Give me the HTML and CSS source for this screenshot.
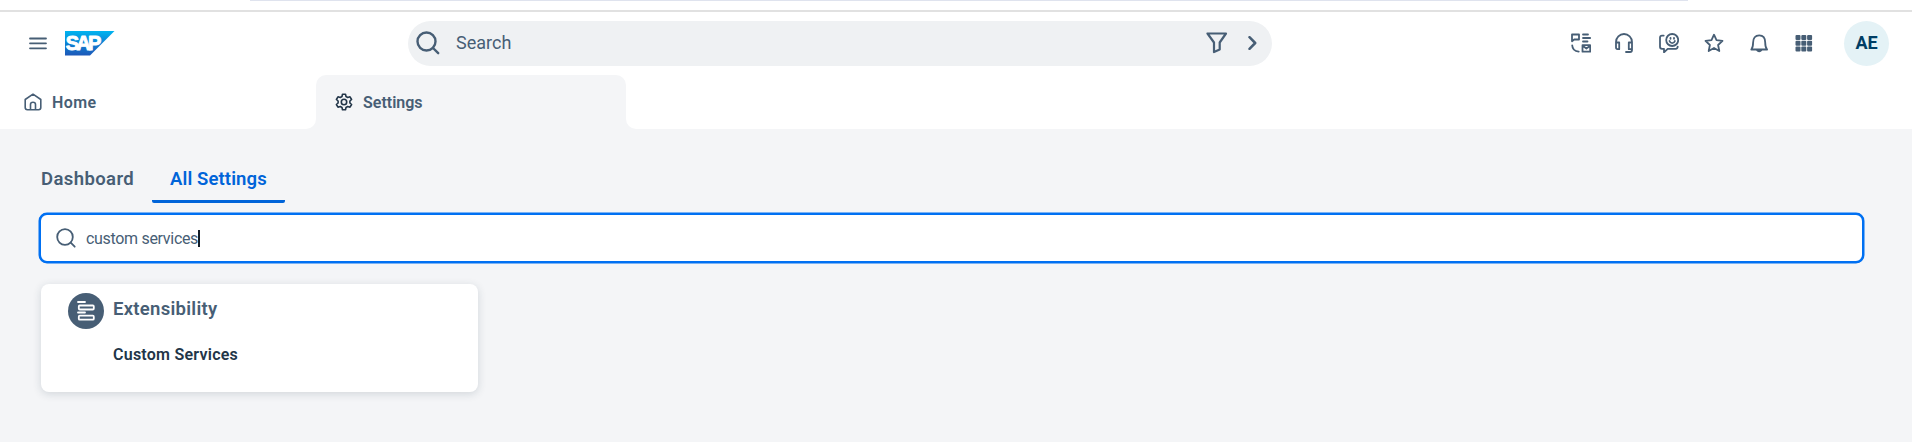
FILE: index.html
```
<!DOCTYPE html>
<html lang="en">
<head>
<meta charset="utf-8">
<title>Settings</title>
<link rel="stylesheet" href="styles.css">
</head>
<body>
<div class="browser-edge"><div class="address-edge"></div></div>
<header class="shell">
  <svg class="menu" viewBox="0 0 18 13"><path d="M1 1.500h16M1 6.300h16M1 11.300h16"/></svg>
  <svg class="logo" viewBox="0 0 50 25" role="img" aria-label="SAP">
    <defs><linearGradient id="sap" x1="0" y1="0" x2="0" y2="1"><stop offset="0" stop-color="#00b4f0"/><stop offset=".5" stop-color="#0d82d4"/><stop offset="1" stop-color="#1d58b8"/></linearGradient></defs>
    <path d="M0 0h49.500L25 24.500H0z" fill="url(#sap)"/>
    <text class="logo-text" x="0.800" y="19.300" textLength="35.500">SAP</text>
  </svg>
  <div class="search">
    <svg class="search-icon" viewBox="0 0 24 24"><circle cx="10.500" cy="10.500" r="9"/><path d="M17 17l5.200 5.200"/></svg>
    <span class="search-label">Search</span>
    <svg class="filter" viewBox="0 0 22 22"><path d="M1.500 1.500h18.500L13.700 10.500v7L8 20v-9.500z"/></svg>
    <svg class="chevron" viewBox="0 0 9 14"><path d="M1.500 1.200L7.200 7l-5.700 5.800"/></svg>
  </div>
  <nav class="actions">
    <svg viewBox="0 0 20 20"><path d="M1 8.200V1.500h7v5H3.200zM12 1.500h5M12 5h7.200M12 8.500h4.500M1.200 12.300c.2 3.700 2.600 6 6.500 6.300M11.500 12.200h7.700v6.500h-7.700zM12 13l3.400 2.500 3.400-2.500"/></svg>
    <svg viewBox="0 0 20 20"><path d="M2 10V9a8 8 0 0 1 16 0v8c0 1.300-.8 2-2 2h-4M2 9.500h3.200v6.700H3.500C2.500 16.200 2 15.500 2 14.500zM18 9.500h-3.200v6.700H18"/></svg>
    <svg viewBox="0 0 20 20"><circle cx="13.200" cy="7" r="6"/><path d="M4.700 2.600H3c-1.300 0-2 .8-2 2v9.200c0 1.300.7 2 2 2h2v3.500l3.700-3.500h8c1.400 0 2-.8 2-2.200M10.500 8c1 2.800 4.400 2.800 5.400 0M11.500 4.800v1M15 4.800v1"/></svg>
    <svg viewBox="0 0 20 20"><path d="M10 1.700l2.500 5.500 6 .7-4.400 4.100 1.200 6-5.300-3-5.300 3 1.200-6L1.500 7.900l6-.7z"/></svg>
    <svg viewBox="0 0 20 20"><path d="M2.300 16.500c1.700-2 1.800-3.700 1.800-7C4.100 5 6.300 2.300 10.200 2.300s6 2.700 6 7.200c0 3.300.1 5 1.900 7z"/><path class="solid" d="M7 16.500h6.400c-.7 3.600-5.700 3.600-6.400 0z"/></svg>
    <svg viewBox="0 0 20 20"><g class="solid"><rect x="1.500" y="2" width="5" height="5" rx="1"/><rect x="7.300" y="2" width="5" height="5" rx="1"/><rect x="13.100" y="2" width="5" height="5" rx="1"/><rect x="1.500" y="7.800" width="5" height="5" rx="1"/><rect x="7.300" y="7.800" width="5" height="5" rx="1"/><rect x="13.100" y="7.800" width="5" height="5" rx="1"/><rect x="1.500" y="13.600" width="5" height="5" rx="1"/><rect x="7.300" y="13.600" width="5" height="5" rx="1"/><rect x="13.100" y="13.600" width="5" height="5" rx="1"/></g></svg>
  </nav>
  <div class="avatar">AE</div>
</header>
<nav class="tabs">
  <div class="tab tab-home">
    <svg viewBox="0 0 18 18"><path d="M1.200 6.500L9 1.200l7.800 5.300v8c0 1.500-.7 2.200-2.200 2.200H3.400c-1.500 0-2.200-.7-2.200-2.200zM6.500 16.500v-5c0-1.500.7-2.200 2.500-2.200s2.500.7 2.500 2.200v5"/></svg>
    <span class="home-label">Home</span>
  </div>
  <div class="tab tab-active">
    <svg viewBox="0 0 18 18"><path d="M7.500 1.200h3l.5 2.300 1.700 1 2.300-.7 1.600 2.700-1.700 1.500v2l1.700 1.500-1.600 2.700-2.300-.7-1.700 1-.5 2.300h-3L7 14.500l-1.700-1-2.300.7-1.600-2.700L3.100 10V8L1.400 6.500 3 3.800l2.300.7 1.700-1z"/><circle cx="9" cy="9" r="2.700"/></svg>
    <span>Settings</span>
  </div>
  <div class="tab-rest"></div>
</nav>
<main class="content">
  <div class="sections">
    <div class="section">Dashboard</div>
    <div class="section section-active">All Settings</div>
  </div>
  <div class="field">
    <svg class="field-icon" viewBox="0 0 20 20"><circle cx="9" cy="9" r="7.800"/><path d="M14.700 14.700l4 4"/></svg>
    <span class="query">custom services</span><span class="caret"></span>
  </div>
  <section class="card">
    <div class="badge"><svg viewBox="0 0 18 20"><path d="M1 1h7M1 11.500h7"/><rect x="1.800" y="4.500" width="15" height="4" rx="1"/><rect x="1.800" y="14.700" width="15" height="4" rx="1"/></svg></div>
    <div class="card-text">
      <h2 class="card-title">Extensibility</h2>
      <a class="card-link">Custom Services</a>
    </div>
  </section>
</main>
</body>
</html>
```
FILE: styles.css
```
* { box-sizing: border-box; }
body {
  margin: 0;
  height: 442px;
  overflow: hidden;
  background: #fff;
  color: #475e75;
  font-family: Roboto, "Liberation Sans", sans-serif;
  white-space: nowrap;
}
svg {
  display: block;
  flex: none;
  fill: none;
  stroke: #475e75;
  stroke-width: 1.8;
  stroke-linecap: round;
  stroke-linejoin: round;
}
.solid { fill: #475e75; stroke: none; }
.browser-edge { height: 12px; border-bottom: 2px solid #e1e1e1; }
.address-edge { width: 1438px; height: 1px; margin-left: 250px; background: #dfe3ee; }
.shell { display: flex; align-items: center; height: 63px; padding-left: 29px; }
.menu { width: 18px; height: 13px; }
.logo { width: 50px; height: 25px; margin-left: 18px; stroke: none; }
.logo-text { fill: #fff; font: 700 20px "Liberation Sans", sans-serif; stroke: #fff; stroke-width: .9; }
.search {
  display: flex;
  align-items: center;
  width: 864px;
  height: 45px;
  margin-left: 293px;
  padding-bottom: 2px;
  border-radius: 23px;
  background: #eff1f3;
}
.search-icon { width: 24px; height: 24px; margin-left: 8px; stroke-width: 2.4; }
.search-label { flex: 1; margin-left: 16px; font-size: 18px; line-height: 24px; }
.filter { width: 22px; height: 22px; margin-right: 20px; stroke-width: 2.2; }
.chevron { width: 9px; height: 14px; margin-right: 15px; stroke-width: 2.5; }
.actions { display: flex; gap: 25px; margin: 0 0 1px 299px; }
.actions svg { width: 20px; height: 20px; }
.actions svg:first-child { margin-right: -2px; }
.avatar {
  width: 45px;
  height: 45px;
  margin-left: 30px;
  border-radius: 50%;
  background: #e4f2f6;
  color: #003e65;
  font-size: 18px;
  font-weight: 700;
  line-height: 43px;
  text-align: center;
}
.tabs { display: flex; height: 54px; background: linear-gradient(#fff 27px, #f4f5f7 27px); font-size: 16px; font-weight: 600; }
.tab { display: flex; align-items: center; gap: 10px; }
.tab svg { width: 18px; height: 18px; stroke-width: 1.6; }
.tab-home { width: 316px; padding-left: 24px; border-bottom-right-radius: 10px; background: #fff; }
.home-label { letter-spacing: .4px; }
.tab-active { width: 310px; padding-left: 19px; border-radius: 10px 10px 0 0; background: #f4f5f7; }
.tab-active svg { stroke: #223548; }
.tab-rest { flex: 1; border-bottom-left-radius: 10px; background: #fff; }
.content { height: 313px; padding: 30px 0 0 39px; background: #f4f5f7; }
.sections { display: flex; height: 44px; font-size: 18.5px; font-weight: 600; line-height: 41px; }
.section { width: 113px; padding-left: 2px; letter-spacing: .4px; }
.section-active { width: 133px; padding-left: 18px; border-bottom: 3px solid #0064d9; border-radius: 2px; color: #0064d9; letter-spacing: .12px; }
.field { display: flex; align-items: center; width: 1825px; height: 50px; margin-top: 10px; border: 2px solid #0070f2; border-radius: 8px; background: #fff; box-shadow: 0 0 0 .5px #0070f2; }
.field-icon { width: 20px; height: 20px; margin-left: 15px; }
.query { margin-left: 10px; font-size: 16px; font-weight: 400; letter-spacing: -.31px; color: #475e75; }
.caret { width: 2px; height: 17px; background: #131e29; }
.card { display: flex; width: 437px; height: 108px; margin: 21px 0 0 2px; padding: 9px 0 0 27px; border-radius: 8px; background: #fff; box-shadow: 0 2px 8px rgba(34,53,72,.16); }
.badge { display: flex; align-items: center; justify-content: center; width: 36px; height: 36px; border-radius: 50%; background: #475e75; }
.badge svg { width: 18px; height: 20px; stroke: #fff; }
.card-text { margin-left: 9px; }
.card-title { margin: 0; font-size: 18.5px; font-weight: 600; line-height: 33px; letter-spacing: .28px; }
.card-link { display: block; margin-top: 15px; color: #223548; font-size: 16px; font-weight: 600; line-height: 28px; letter-spacing: .25px; }
```
